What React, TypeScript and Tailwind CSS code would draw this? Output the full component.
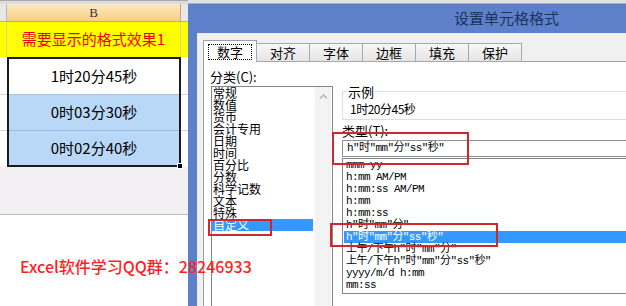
const CATEGORIES = ['常规', '数值', '货币', '会计专用', '日期', '时间', '百分比', '分数', '科学记数', '文本', '特殊', '自定义'];

const FORMATS = [
  'mmm yy',
  'h:mm AM/PM',
  'h:mm:ss AM/PM',
  'h:mm',
  'h:mm:ss',
  'h"时"mm"分"',
  'h"时"mm"分"ss"秒"',
  '上午/下午h"时"mm"分"',
  '上午/下午h"时"mm"分"ss"秒"',
  'yyyy/m/d h:mm',
  'mm:ss',
];

const TABS = ['数字', '对齐', '字体', '边框', '填充', '保护'];

function Sheet() {
  return (
    <div className="flex w-[188px] shrink-0 flex-col">
      <div className="h-[4px] border-t border-[#a9a9a9] bg-[#dcdcdc]" />
      <div className="flex h-[18px] border-b border-[#e0a64c]">
        <div className="w-[7px] border-r border-[#b9b9b9] bg-[#e8e8e8]" />
        <div className="flex w-[174px] items-center justify-center border-r border-[#d7a55a] bg-gradient-to-b from-[#fdebc2] to-[#f8cd83] font-['Liberation_Serif',serif] text-[13px] text-[#333]">
          B
        </div>
        <div className="flex-1 bg-[#e8e8e8]" />
      </div>
      <div className="flex h-[35px] bg-[#ffff00]">
        <div className="w-[7px] border-r border-[#d6d49a]" />
        <div className="flex w-[174px] items-center justify-center border-r border-[#d6d49a] text-[15px] text-[#f00000]">
          需要显示的格式效果1
        </div>
        <div className="flex-1" />
      </div>
      <div className="flex h-[110px]">
        <div className="flex w-[7px] flex-col bg-white">
          <div className="h-[38px] border-b border-[#d4d4d4]" />
          <div className="h-[36px] border-b border-[#d4d4d4]" />
          <div className="flex-1" />
        </div>
        <div className="relative flex w-[174px] flex-col border-2 border-[#1b1b1b] text-[15px] text-black">
          <div className="flex h-[36px] items-center justify-center border-b border-[#a6c2e4] bg-white">1时20分45秒</div>
          <div className="flex h-[36px] items-center justify-center border-b border-[#9dbbe0] bg-[#b9d7f7]">0时03分30秒</div>
          <div className="flex flex-1 items-center justify-center bg-[#b9d7f7]">0时02分40秒</div>
          <div className="absolute -bottom-[4px] -right-[4px] h-[6px] w-[6px] border border-white bg-black" />
        </div>
        <div className="flex flex-1 flex-col bg-white">
          <div className="h-[38px] border-b border-[#d4d4d4]" />
          <div className="h-[36px] border-b border-[#d4d4d4]" />
          <div className="flex-1" />
        </div>
      </div>
      <div className="h-[48px] border-b border-[#bcbcbc] bg-[#f2f0f2]" />
      <div className="flex-1 bg-white" />
    </div>
  );
}

function Tabs() {
  return (
    <div className="relative z-10 -mb-px flex h-[22px] items-end">
      {TABS.map((t, i) =>
        i === 0 ? (
          <div
            key={t}
            className="flex h-[22px] w-[54px] items-center justify-center border border-b-0 border-[#a0a0a0] bg-white text-[13px]"
          >
            <span className="border border-dotted border-black px-[8px] leading-[14px]">{t}</span>
          </div>
        ) : (
          <div
            key={t}
            className="-ml-px flex h-[19px] w-[54px] items-center justify-center border border-[#a8a8a8] bg-gradient-to-b from-[#f7f7f7] to-[#e5e5e5] text-[13px]"
          >
            {t}
          </div>
        ),
      )}
    </div>
  );
}

function Panel() {
  return (
    <div className="flex min-h-0 flex-1 border-l border-t border-[#a0a0a0] bg-white pt-[7px]">
      <div className="flex w-[129px] shrink-0 flex-col pl-[7px]">
        <div className="-ml-px text-[13px] leading-[15px]">分类(C):</div>
        <div className="mt-[2px] flex min-h-0 flex-1 border border-b-0 border-[#828790]">
          <div className="w-[103px] text-[12px] leading-[12px]">
            {CATEGORIES.map((c, i) => (
              <div
                key={c}
                className={
                  i === CATEGORIES.length - 1
                    ? 'mr-[2px] h-[12px] bg-[#3399ff] pl-[1px] text-white'
                    : 'h-[12px] pl-[1px] text-black'
                }
              >
                {c}
              </div>
            ))}
          </div>
          <div className="flex w-[16px] flex-col items-center bg-[#f3f3f3] pt-[7px]">
            <svg width="9" height="5" viewBox="0 0 9 5" fill="none" stroke="#b4b4b4" strokeWidth="1.5">
              <path d="M1 4.5 4.5 1 8 4.5" />
            </svg>
          </div>
        </div>
      </div>
      <div className="ml-[9px] flex min-w-0 flex-1 flex-col pt-[22px]">
        <div className="relative h-[29px] border border-r-0 border-[#d5dfe5]">
          <span className="absolute -top-[8px] left-[4px] bg-white px-[1px] text-[13px] leading-[15px]">示例</span>
          <div className="pl-[7px] pt-[10px] text-[12px] leading-[14px] tracking-[-0.5px]">1时20分45秒</div>
        </div>
        <div className="mt-[3px] text-[13px] leading-[16px]">类型(T):</div>
        <div className="mt-px flex h-[17px] items-center border border-r-0 border-[#8f8f8f] pl-[4px] font-['Liberation_Mono','Noto_Sans_CJK_SC',monospace] text-[11px] tracking-[-0.6px] whitespace-pre">
          h"时"mm"分"ss"秒"
        </div>
        <div className="mt-px h-[136px] overflow-hidden border border-r-0 border-[#828790] pl-px font-['Liberation_Mono','Noto_Sans_CJK_SC',monospace] text-[11px] leading-[12px] tracking-[-0.6px]">
          {FORMATS.map((f, i) => (
            <div
              key={f}
              className={
                i === 6
                  ? 'h-[12px] bg-[#3399ff] pl-[2px] whitespace-pre text-white'
                  : 'h-[12px] pl-[2px] whitespace-pre text-black'
              }
            >
              {f}
            </div>
          ))}
        </div>
      </div>
    </div>
  );
}

function Dialog() {
  return (
    <div className="flex min-w-0 flex-1 flex-col bg-[#5e80ca]">
      <div className="h-[4px] shrink-0 border-b border-[#a2afc8] bg-[#e2e2e2]" />
      <div className="flex h-[29px] shrink-0 items-center pl-[266px] text-[15px] text-[#1c355e]">设置单元格格式</div>
      <div className="flex min-h-0 flex-1">
        <div className="w-[9px] shrink-0" />
        <div className="flex min-w-0 flex-1 flex-col bg-[#f0f0f0] pl-[6px] pt-[7px]">
          <Tabs />
          <Panel />
        </div>
      </div>
    </div>
  );
}

export default function App() {
  return (
    <div className="relative flex h-[306px] w-[626px] overflow-hidden bg-white font-['Noto_Sans_CJK_SC',sans-serif] text-black">
      <Sheet />
      <Dialog />

      {/* red annotation boxes */}
      <div className="absolute left-[208px] top-[219px] h-[17px] w-[64px] border-2 border-[#d0262c]" />
      <div className="absolute left-[332px] top-[132px] h-[33px] w-[137px] border-2 border-[#d0262c]" />
      <div className="absolute left-[330px] top-[223px] h-[24px] w-[168px] border-2 border-[#d0262c]" />

      <p className="absolute left-[20px] top-[256px] text-[16px] font-medium leading-[20px] text-[#ff1f1f]">
        Excel软件学习QQ群：28246933
      </p>
    </div>
  );
}
